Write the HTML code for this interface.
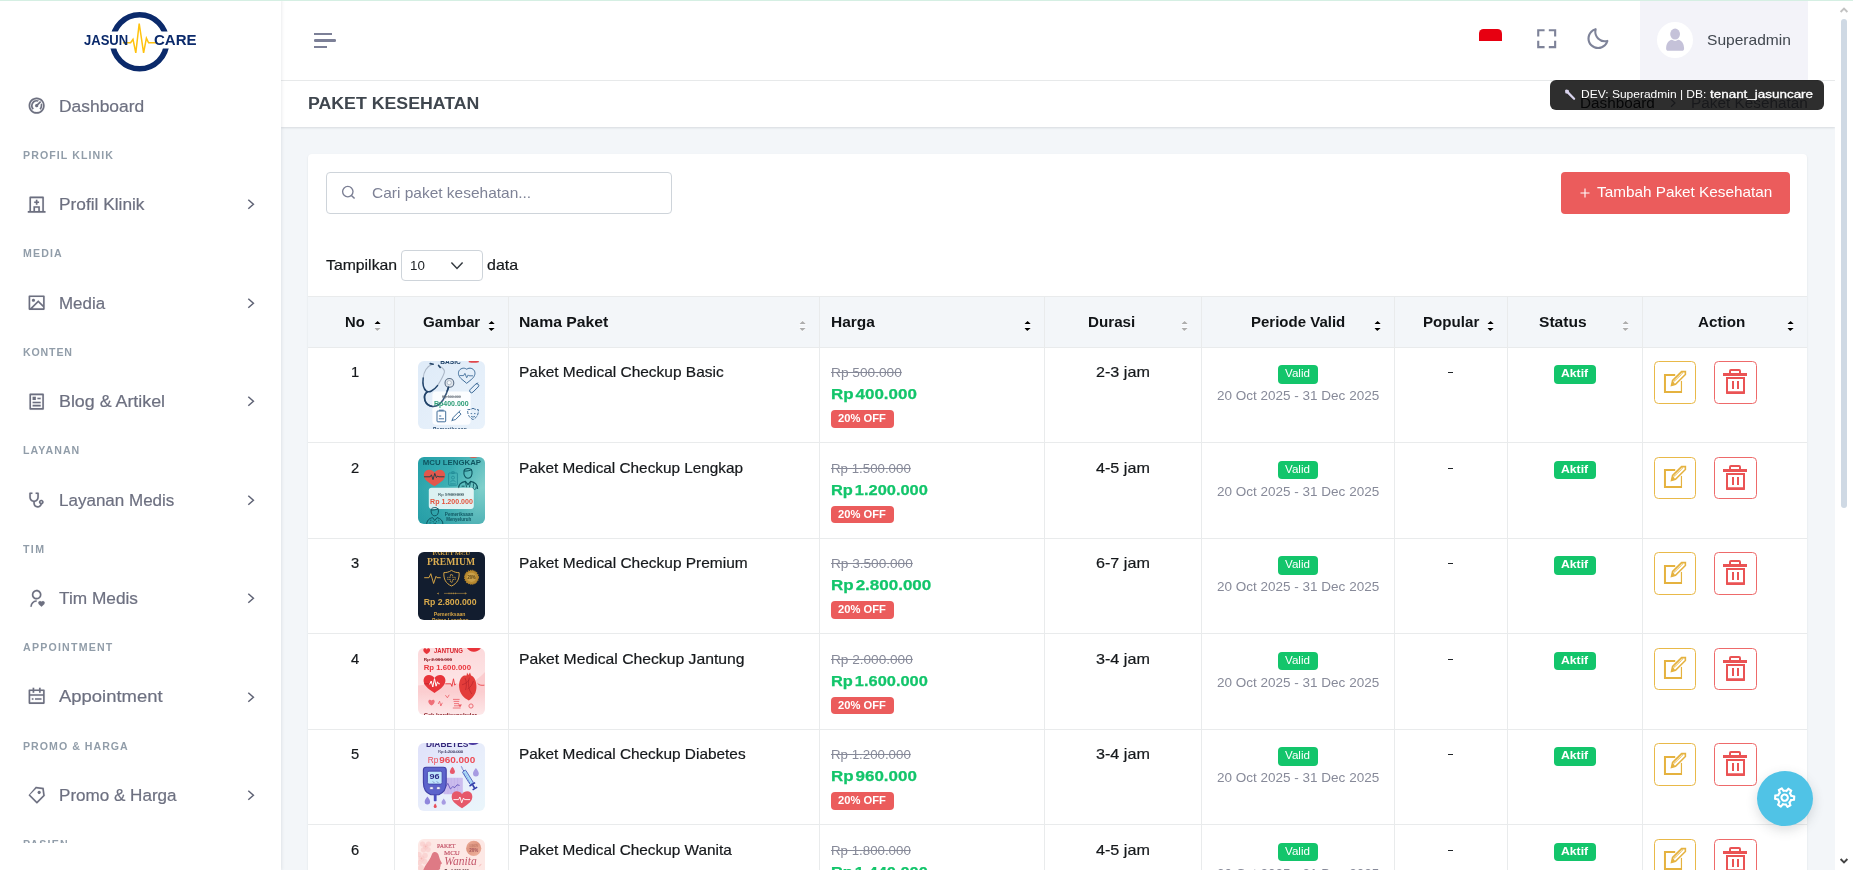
<!DOCTYPE html>
<html lang="en"><head><meta charset="utf-8"><title>Paket Kesehatan</title>
<style>
html,body{margin:0;padding:0;width:1853px;height:870px;overflow:hidden;background:#fff}
body{font-family:"Liberation Sans",sans-serif;}
#root{position:relative;width:1853px;height:870px;overflow:hidden;background:#fff}
.a{position:absolute;display:block}
.t{position:absolute;white-space:pre;line-height:1;display:block;transform-origin:0 50%}
</style></head><body><div id="root">

<div class="a" style="left:281px;top:0;width:1554px;height:870px;background:#f3f6f9"></div>
<div class="a" style="left:281px;top:0;width:1554px;height:80px;background:#fff;border-bottom:1px solid #e9ebec"></div>
<div class="a" style="left:281px;top:81px;width:1554px;height:46px;background:#fff;box-shadow:0 1px 2px rgba(56,65,74,.15)"></div>
<div class="a" style="left:0;top:0;width:1853px;height:1px;background:#d5efe3;z-index:50"></div>
<div class="a" style="left:0;top:0;width:281px;height:870px;background:#fff;box-shadow:1px 0 3px rgba(56,65,74,.10)"></div>
<svg class="a" style="left:70px;top:0" width="140" height="80" viewBox="0 0 140 80">
<defs><clipPath id="lc"><path d="M0 0H140V31.6H0zM0 48.4H140V80H0z"/></clipPath></defs>
<circle cx="69.6" cy="41.8" r="27" fill="none" stroke="#0b2a6b" stroke-width="5.6" clip-path="url(#lc)"/>
<path d="M52.9 42.8H60.6L63 39.4L65.8 52.9L69.2 23.5L73.6 52.9L76.4 38.2L78.6 42.8H86.5" fill="none" stroke="#ffc20e" stroke-width="1.5" stroke-linejoin="miter" stroke-linecap="butt"/>
</svg>
<span class="t" style="left:83.96px;top:32.57px;font-size:14.8px;font-weight:700;color:#0b2a6b;transform:scaleX(0.8810);">JASUN</span>
<span class="t" style="left:154.36px;top:32.57px;font-size:14.8px;font-weight:700;color:#0b2a6b;transform:scaleX(1.0155);">CARE</span>
<div class="a" style="left:0;top:80px;width:281px;height:763px;overflow:hidden">
<svg class="a" style="left:26.95px;top:16.35px;" width="19.3" height="19.3" viewBox="0 0 24 24"><path fill="#6d7080" stroke="#6d7080" stroke-width="0.12" d="M12 2c5.523 0 10 4.477 10 10s-4.477 10-10 10S2 17.523 2 12 6.477 2 12 2zm0 2a8 8 0 1 0 0 16 8 8 0 0 0 0-16zm0 1c1.018 0 1.985.217 2.858.608L13.295 7.17A5.003 5.003 0 0 0 7 12a4.98 4.98 0 0 0 1.464 3.536L7.05 16.95l-.156-.161A7 7 0 0 1 12 5zm6.392 4.143c.39.872.608 1.84.608 2.857a6.978 6.978 0 0 1-2.05 4.95l-1.414-1.414A4.98 4.98 0 0 0 17 12c0-.44-.057-.866-.163-1.272l1.555-1.585zm-2.15-2.8l1.415 1.414-3.725 3.726a2 2 0 1 1-1.414-1.414l3.725-3.726z"/></svg>
<span class="t" style="left:58.59px;top:17.90px;font-size:16.3px;font-weight:400;color:#6d7080;transform:scaleX(1.0693);-webkit-text-stroke:.2px #6d7080;">Dashboard</span>
<svg class="a" style="left:26.95px;top:114.78px;" width="19.3" height="19.3" viewBox="0 0 24 24"><path fill="#6d7080" stroke="#6d7080" stroke-width="0.12" d="M8 20v-6h8v6h3V4H5v16h3zm2 0h4v-4h-4v4zm11 0h2v2H1v-2h2V3a1 1 0 0 1 1-1h16a1 1 0 0 1 1 1v17zM11 8V6h2v2h2v2h-2v2h-2v-2H9V8h2z"/></svg>
<span class="t" style="left:58.59px;top:116.33px;font-size:16.3px;font-weight:400;color:#6d7080;transform:scaleX(1.0614);-webkit-text-stroke:.2px #6d7080;">Profil Klinik</span>
<svg class="a" style="left:244px;top:116.43px" width="14" height="16" viewBox="0 0 14 16"><path d="M4.3 3.7L9.4 8.2L4.3 12.7" fill="none" stroke="#5f6375" stroke-width="1.5"/></svg>
<svg class="a" style="left:26.95px;top:213.21px;" width="19.3" height="19.3" viewBox="0 0 24 24"><path fill="#6d7080" stroke="#6d7080" stroke-width="0.12" d="M4.828 21l-.02.02-.021-.02H2.992A.993.993 0 0 1 2 20.007V3.993A1 1 0 0 1 2.992 3h18.016c.548 0 .992.445.992.993v16.014a1 1 0 0 1-.992.993H4.828zM20 15V5H4v14L14 9l6 6zm0 2.828l-6-6L6.828 19H20v-1.172zM8 11a2 2 0 1 1 0-4 2 2 0 0 1 0 4z"/></svg>
<span class="t" style="left:58.59px;top:214.76px;font-size:16.3px;font-weight:400;color:#6d7080;transform:scaleX(1.0387);-webkit-text-stroke:.2px #6d7080;">Media</span>
<svg class="a" style="left:244px;top:214.86px" width="14" height="16" viewBox="0 0 14 16"><path d="M4.3 3.7L9.4 8.2L4.3 12.7" fill="none" stroke="#5f6375" stroke-width="1.5"/></svg>
<svg class="a" style="left:26.95px;top:311.64px;" width="19.3" height="19.3" viewBox="0 0 24 24"><path fill="#6d7080" stroke="#6d7080" stroke-width="0.12" d="M20 22H4a1 1 0 0 1-1-1V3a1 1 0 0 1 1-1h16a1 1 0 0 1 1 1v18a1 1 0 0 1-1 1zm-1-2V4H5v16h14zM7 6h4v4H7V6zm0 6h10v2H7v-2zm0 4h10v2H7v-2zm6-9h4v2h-4V7z"/></svg>
<span class="t" style="left:58.59px;top:313.19px;font-size:16.3px;font-weight:400;color:#6d7080;transform:scaleX(1.0954);-webkit-text-stroke:.2px #6d7080;">Blog &amp; Artikel</span>
<svg class="a" style="left:244px;top:313.29px" width="14" height="16" viewBox="0 0 14 16"><path d="M4.3 3.7L9.4 8.2L4.3 12.7" fill="none" stroke="#5f6375" stroke-width="1.5"/></svg>
<svg class="a" style="left:26.05px;top:410.07px;" width="19.3" height="19.3" viewBox="0 0 24 24"><path fill="#6d7080" stroke="#6d7080" stroke-width="0.12" d="M8 3v2H6v4c0 2.21 1.79 4 4 4s4-1.79 4-4V5h-2V3h3a1 1 0 0 1 1 1v5c0 2.973-2.162 5.44-5 5.917V16.5c0 1.933 1.567 3.5 3.5 3.5 1.497 0 2.775-.94 3.275-2.263C16.728 17.27 16 16.22 16 15c0-1.657 1.343-3 3-3s3 1.343 3 3c0 1.371-.92 2.527-2.176 2.885C19.21 20.252 17.059 22 14.5 22 11.462 22 9 19.538 9 16.5v-1.583C6.162 14.441 4 11.973 4 9V4a1 1 0 0 1 1-1h3zm11 11c-.552 0-1 .448-1 1s.448 1 1 1 1-.448 1-1-.448-1-1-1z"/></svg>
<span class="t" style="left:58.59px;top:411.62px;font-size:16.3px;font-weight:400;color:#6d7080;transform:scaleX(1.0447);-webkit-text-stroke:.2px #6d7080;">Layanan Medis</span>
<svg class="a" style="left:244px;top:411.72px" width="14" height="16" viewBox="0 0 14 16"><path d="M4.3 3.7L9.4 8.2L4.3 12.7" fill="none" stroke="#5f6375" stroke-width="1.5"/></svg>
<svg class="a" style="left:26.95px;top:508.50px;" width="19.3" height="19.3" viewBox="0 0 24 24"><path fill="#6d7080" stroke="#6d7080" stroke-width="0.12" d="M17.841 15.659l.176.177.178-.177a2.25 2.25 0 0 1 3.182 3.182l-3.36 3.359-3.358-3.359a2.25 2.25 0 0 1 3.182-3.182zM12 14v2a6 6 0 0 0-6 6H4a8 8 0 0 1 7.75-7.996L12 14zm0-13c3.315 0 6 2.685 6 6a5.998 5.998 0 0 1-5.775 5.996L12 13c-3.315 0-6-2.685-6-6a5.998 5.998 0 0 1 5.775-5.996L12 1zm0 2C9.79 3 8 4.79 8 7s1.79 4 4 4 4-1.79 4-4-1.79-4-4-4z"/></svg>
<span class="t" style="left:58.59px;top:510.05px;font-size:16.3px;font-weight:400;color:#6d7080;transform:scaleX(1.0603);-webkit-text-stroke:.2px #6d7080;">Tim Medis</span>
<svg class="a" style="left:244px;top:510.15px" width="14" height="16" viewBox="0 0 14 16"><path d="M4.3 3.7L9.4 8.2L4.3 12.7" fill="none" stroke="#5f6375" stroke-width="1.5"/></svg>
<svg class="a" style="left:26.95px;top:606.93px;" width="19.3" height="19.3" viewBox="0 0 24 24"><path fill="#6d7080" stroke="#6d7080" stroke-width="0.12" d="M17 3h4a1 1 0 0 1 1 1v16a1 1 0 0 1-1 1H3a1 1 0 0 1-1-1V4a1 1 0 0 1 1-1h4V1h2v2h6V1h2v2zm-2 2H9v2H7V5H4v4h16V5h-3v2h-2V5zm5 6H4v8h16v-8zM6 14h2v2H6v-2zm4 0h8v2h-8v-2z"/></svg>
<span class="t" style="left:58.59px;top:608.48px;font-size:16.3px;font-weight:400;color:#6d7080;transform:scaleX(1.1330);-webkit-text-stroke:.2px #6d7080;">Appointment</span>
<svg class="a" style="left:244px;top:608.58px" width="14" height="16" viewBox="0 0 14 16"><path d="M4.3 3.7L9.4 8.2L4.3 12.7" fill="none" stroke="#5f6375" stroke-width="1.5"/></svg>
<svg class="a" style="left:26.95px;top:705.36px;" width="19.3" height="19.3" viewBox="0 0 24 24"><path fill="#6d7080" stroke="#6d7080" stroke-width="0.12" d="M10.9 2.1l9.899 1.415 1.414 9.9-9.192 9.192a1 1 0 0 1-1.414 0l-9.19-9.192a1 1 0 0 1 0-1.414L10.9 2.1zm.707 2.122L3.828 12l8.486 8.485 7.778-7.778-1.06-7.425-7.425-1.06zm2.12 6.364a2 2 0 1 1 2.83-2.829 2 2 0 0 1-2.83 2.829z"/></svg>
<span class="t" style="left:58.59px;top:706.91px;font-size:16.3px;font-weight:400;color:#6d7080;transform:scaleX(1.0478);-webkit-text-stroke:.2px #6d7080;">Promo &amp; Harga</span>
<svg class="a" style="left:244px;top:707.01px" width="14" height="16" viewBox="0 0 14 16"><path d="M4.3 3.7L9.4 8.2L4.3 12.7" fill="none" stroke="#5f6375" stroke-width="1.5"/></svg>
<span class="t" style="left:23.37px;top:70.03px;font-size:10.6px;font-weight:700;color:#919da9;letter-spacing:1.086px;transform:scaleX(1.0002);">PROFIL KLINIK</span>
<span class="t" style="left:23.37px;top:168.46px;font-size:10.6px;font-weight:700;color:#919da9;letter-spacing:1.149px;transform:scaleX(1.0002);">MEDIA</span>
<span class="t" style="left:23.37px;top:266.89px;font-size:10.6px;font-weight:700;color:#919da9;letter-spacing:0.840px;transform:scaleX(1.0002);">KONTEN</span>
<span class="t" style="left:23.37px;top:365.32px;font-size:10.6px;font-weight:700;color:#919da9;letter-spacing:1.065px;transform:scaleX(1.0002);">LAYANAN</span>
<span class="t" style="left:23.37px;top:463.75px;font-size:10.6px;font-weight:700;color:#919da9;letter-spacing:1.393px;transform:scaleX(1.0002);">TIM</span>
<span class="t" style="left:23.37px;top:562.18px;font-size:10.6px;font-weight:700;color:#919da9;letter-spacing:1.223px;transform:scaleX(1.0002);">APPOINTMENT</span>
<span class="t" style="left:23.37px;top:660.61px;font-size:10.6px;font-weight:700;color:#919da9;letter-spacing:1.027px;transform:scaleX(1.0002);">PROMO &amp; HARGA</span>
<span class="t" style="left:23.37px;top:759.04px;font-size:10.6px;font-weight:700;color:#919da9;letter-spacing:1.196px;transform:scaleX(1.0002);">PASIEN</span>
</div>
<div class="a" style="left:314px;top:33px;width:18px;height:2px;background:#7c8097"></div><div class="a" style="left:314px;top:39.2px;width:21.8px;height:2.6px;border-radius:1.3px;background:#7c8097"></div><div class="a" style="left:314px;top:46px;width:13px;height:2px;background:#7c8097"></div>
<div class="a" style="left:1479px;top:28.8px;width:23px;height:11.8px;background:#e70011;border-radius:4.5px 4.5px 0 0"></div>
<svg class="a" style="left:1533.80px;top:26.30px;" width="25.4" height="25.4" viewBox="0 0 24 24"><path fill="#7e8399" stroke="#7e8399" stroke-width="0" d="M5 5h5V3H3v7h2zm5 14H5v-5H3v7h7zm11-5h-2v5h-5v2h7zm-2-4h2V3h-7v2h5z"/></svg>
<svg class="a" style="left:1585.32px;top:26.32px;" width="25.56" height="25.56" viewBox="0 0 24 24"><path fill="#7e8399" stroke="#7e8399" stroke-width="0" d="M20.742 13.045a8.088 8.088 0 0 1-2.077.271c-2.135 0-4.14-.83-5.646-2.336a8.025 8.025 0 0 1-2.064-7.723A1 1 0 0 0 9.73 2.034a10.014 10.014 0 0 0-4.489 2.582c-3.898 3.898-3.898 10.243 0 14.143a9.937 9.937 0 0 0 7.072 2.930 9.930 9.930 0 0 0 7.070-2.929 10.007 10.007 0 0 0 2.583-4.491 1.001 1.001 0 0 0-1.224-1.224zm-2.772 4.301a7.947 7.947 0 0 1-5.656 2.343 7.953 7.953 0 0 1-5.658-2.344c-3.118-3.119-3.118-8.195 0-11.314a7.923 7.923 0 0 1 2.060-1.483 10.027 10.027 0 0 0 2.890 7.848 9.972 9.972 0 0 0 7.848 2.891 8.036 8.036 0 0 1-1.484 2.059z"/></svg>
<div class="a" style="left:1640px;top:1px;width:168px;height:79px;background:#f3f3f9"></div>
<svg class="a" style="left:1657px;top:22px" width="36" height="36" viewBox="0 0 36 36"><circle cx="18" cy="18" r="18" fill="#fff"/>
<ellipse cx="18.1" cy="12.1" rx="4.9" ry="5.5" fill="#c5c2d9"/><path d="M9.100 26.400c.2-4.800 2.200-7.900 5.900-8.600c1.900 1.500 4.300 1.500 6.200 0c3.700.700 5.700 3.800 5.900 8.600c0 1.500-.800 2.400-2.200 2.400H11.300c-1.400 0-2.200-.900-2.200-2.400z" fill="#c5c2d9"/></svg>
<span class="t" style="left:1706.65px;top:32.20px;font-size:15px;font-weight:400;color:#41474f;transform:scaleX(1.0372);">Superadmin</span>
<span class="t" style="left:308.11px;top:95.53px;font-size:15.8px;font-weight:700;color:#3f464e;transform:scaleX(1.1226);">PAKET KESEHATAN</span>
<span class="t" style="left:1580.30px;top:96.15px;font-size:14px;font-weight:400;color:#212529;transform:scaleX(1.0926);">Dashboard</span>
<svg class="a" style="left:1667px;top:97px" width="12" height="12" viewBox="0 0 12 12"><path d="M4 2.2L8 6L4 9.8" fill="none" stroke="#878a99" stroke-width="1.2"/></svg>
<span class="t" style="left:1691.30px;top:96.15px;font-size:14px;font-weight:400;color:#878a99;transform:scaleX(1.0956);">Paket Kesehatan</span>
<div class="a" style="left:1550px;top:80px;width:274px;height:29.5px;background:rgba(0,0,0,.82);border-radius:6px;z-index:20"></div>
<svg class="a" style="left:1564px;top:88px;z-index:21" width="13" height="13" viewBox="0 0 13 13"><path d="M2 1.4l2.6.5.5 2.2 5.8 5.8a1 1 0 0 1-1.6 1.6L3.5 5.7 1.4 5.2 1 2.6z" fill="#d9d4ee"/></svg>
<span class="t" style="left:1581.45px;top:88.89px;font-size:11px;font-weight:400;color:#fff;transform:scaleX(1.0903);z-index:21;">DEV: Superadmin | DB: </span>
<span class="t" style="left:1710.05px;top:88.89px;font-size:11px;font-weight:400;color:#fff;transform:scaleX(1.2210);z-index:21;-webkit-text-stroke:.3px #fff;">tenant_jasuncare</span>
<div class="a" style="left:308px;top:154px;width:1499.3px;height:740px;background:#fff;border-radius:4px;box-shadow:0 1px 2px rgba(56,65,74,.12)"></div>
<div class="a" style="left:326px;top:172px;width:344px;height:40px;border:1px solid #ced4da;border-radius:4px;background:#fff"></div>
<svg class="a" style="left:341px;top:184.7px" width="15" height="15" viewBox="0 0 15 15"><circle cx="6.8" cy="6.6" r="5.2" fill="none" stroke="#7a7e93" stroke-width="1.35"/><path d="M10.4 10.4L13.6 13.6" stroke="#7a7e93" stroke-width="1.45"/></svg>
<span class="t" style="left:371.57px;top:186.03px;font-size:14.5px;font-weight:400;color:#7e8296;transform:scaleX(1.0674);">Cari paket kesehatan...</span>
<div class="a" style="left:1561px;top:172px;width:229px;height:41.5px;background:#eb5c5c;border-radius:4px"></div>
<svg class="a" style="left:1579px;top:187px" width="12" height="12" viewBox="0 0 12 12"><path d="M6 1.5V10.5M1.5 6H10.5" stroke="#fff" stroke-width="1.1"/></svg>
<span class="t" style="left:1597.16px;top:185.27px;font-size:14.8px;font-weight:400;color:#fff;transform:scaleX(1.0343);">Tambah Paket Kesehatan</span>
<span class="t" style="left:325.55px;top:257.30px;font-size:15px;font-weight:400;color:#15181b;transform:scaleX(1.0528);-webkit-text-stroke:.2px #15181b;">Tampilkan</span>
<div class="a" style="left:401.4px;top:250.3px;width:79.4px;height:28.4px;border:1px solid #ced4da;border-radius:4px;background:#fff"></div>
<span class="t" style="left:409.85px;top:259.00px;font-size:13px;font-weight:400;color:#212529;transform:scaleX(1.0284);">10</span>
<svg class="a" style="left:449px;top:259px" width="16" height="14" viewBox="0 0 16 14"><path d="M2.4 3.6L8 9.4L13.6 3.6" fill="none" stroke="#343a40" stroke-width="1.5"/></svg>
<span class="t" style="left:486.65px;top:257.30px;font-size:15px;font-weight:400;color:#15181b;transform:scaleX(1.0650);-webkit-text-stroke:.2px #15181b;">data</span>
<div class="a" style="left:308px;top:296px;width:1499.3px;height:50px;background:#f3f6f9;border-top:1px solid #e9ebec;border-bottom:1px solid #e9ebec;box-sizing:content-box"></div>
<div class="a" style="left:308px;top:442px;width:1499.3px;height:1px;background:#e9ebec"></div>
<div class="a" style="left:308px;top:538px;width:1499.3px;height:1px;background:#e9ebec"></div>
<div class="a" style="left:308px;top:633px;width:1499.3px;height:1px;background:#e9ebec"></div>
<div class="a" style="left:308px;top:729px;width:1499.3px;height:1px;background:#e9ebec"></div>
<div class="a" style="left:308px;top:824px;width:1499.3px;height:1px;background:#e9ebec"></div>
<div class="a" style="left:394px;top:296px;width:1px;height:574px;background:#e9ebec"></div>
<div class="a" style="left:508px;top:296px;width:1px;height:574px;background:#e9ebec"></div>
<div class="a" style="left:819px;top:296px;width:1px;height:574px;background:#e9ebec"></div>
<div class="a" style="left:1044px;top:296px;width:1px;height:574px;background:#e9ebec"></div>
<div class="a" style="left:1201px;top:296px;width:1px;height:574px;background:#e9ebec"></div>
<div class="a" style="left:1394px;top:296px;width:1px;height:574px;background:#e9ebec"></div>
<div class="a" style="left:1507px;top:296px;width:1px;height:574px;background:#e9ebec"></div>
<div class="a" style="left:1642px;top:296px;width:1px;height:574px;background:#e9ebec"></div>
<span class="t" style="left:344.87px;top:314.64px;font-size:14.6px;font-weight:700;color:#111417;transform:scaleX(1.0106);">No</span>
<svg class="a" style="left:373.59999999999997px;top:320px" width="8" height="12" viewBox="0 0 8 12"><g stroke="#fff" stroke-width="1.1" stroke-opacity=".8" paint-order="stroke"><path d="M0.5 4.1L3.6 0.9L6.7 4.1z" fill="#000"/><path d="M0.5 7.9H6.7L3.2 11.1z" fill="#adadad"/></g></svg>
<span class="t" style="left:422.87px;top:314.64px;font-size:14.6px;font-weight:700;color:#111417;transform:scaleX(1.0384);">Gambar</span>
<svg class="a" style="left:487.9px;top:320px" width="8" height="12" viewBox="0 0 8 12"><g stroke="#fff" stroke-width="1.1" stroke-opacity=".8" paint-order="stroke"><path d="M0.5 4.1L3.6 0.9L6.7 4.1z" fill="#000"/><path d="M0.5 7.9H6.7L3.2 11.1z" fill="#000"/></g></svg>
<span class="t" style="left:518.87px;top:314.64px;font-size:14.6px;font-weight:700;color:#111417;transform:scaleX(1.0789);">Nama Paket</span>
<svg class="a" style="left:798.8px;top:320px" width="8" height="12" viewBox="0 0 8 12"><g stroke="#fff" stroke-width="1.1" stroke-opacity=".8" paint-order="stroke"><path d="M0.5 4.1L3.6 0.9L6.7 4.1z" fill="#adadad"/><path d="M0.5 7.9H6.7L3.2 11.1z" fill="#adadad"/></g></svg>
<span class="t" style="left:830.67px;top:314.64px;font-size:14.6px;font-weight:700;color:#111417;transform:scaleX(1.0604);">Harga</span>
<svg class="a" style="left:1023.9999999999999px;top:320px" width="8" height="12" viewBox="0 0 8 12"><g stroke="#fff" stroke-width="1.1" stroke-opacity=".8" paint-order="stroke"><path d="M0.5 4.1L3.6 0.9L6.7 4.1z" fill="#000"/><path d="M0.5 7.9H6.7L3.2 11.1z" fill="#000"/></g></svg>
<span class="t" style="left:1087.87px;top:314.64px;font-size:14.6px;font-weight:700;color:#111417;transform:scaleX(1.0408);">Durasi</span>
<svg class="a" style="left:1180.6000000000001px;top:320px" width="8" height="12" viewBox="0 0 8 12"><g stroke="#fff" stroke-width="1.1" stroke-opacity=".8" paint-order="stroke"><path d="M0.5 4.1L3.6 0.9L6.7 4.1z" fill="#adadad"/><path d="M0.5 7.9H6.7L3.2 11.1z" fill="#adadad"/></g></svg>
<span class="t" style="left:1250.87px;top:314.64px;font-size:14.6px;font-weight:700;color:#111417;transform:scaleX(1.0286);">Periode Valid</span>
<svg class="a" style="left:1374.0px;top:320px" width="8" height="12" viewBox="0 0 8 12"><g stroke="#fff" stroke-width="1.1" stroke-opacity=".8" paint-order="stroke"><path d="M0.5 4.1L3.6 0.9L6.7 4.1z" fill="#000"/><path d="M0.5 7.9H6.7L3.2 11.1z" fill="#000"/></g></svg>
<span class="t" style="left:1423.27px;top:314.64px;font-size:14.6px;font-weight:700;color:#111417;transform:scaleX(1.0359);">Popular</span>
<svg class="a" style="left:1487.2px;top:320px" width="8" height="12" viewBox="0 0 8 12"><g stroke="#fff" stroke-width="1.1" stroke-opacity=".8" paint-order="stroke"><path d="M0.5 4.1L3.6 0.9L6.7 4.1z" fill="#000"/><path d="M0.5 7.9H6.7L3.2 11.1z" fill="#000"/></g></svg>
<span class="t" style="left:1538.87px;top:314.64px;font-size:14.6px;font-weight:700;color:#111417;transform:scaleX(1.0687);">Status</span>
<svg class="a" style="left:1622.0px;top:320px" width="8" height="12" viewBox="0 0 8 12"><g stroke="#fff" stroke-width="1.1" stroke-opacity=".8" paint-order="stroke"><path d="M0.5 4.1L3.6 0.9L6.7 4.1z" fill="#adadad"/><path d="M0.5 7.9H6.7L3.2 11.1z" fill="#adadad"/></g></svg>
<span class="t" style="left:1697.87px;top:314.64px;font-size:14.6px;font-weight:700;color:#111417;transform:scaleX(1.0412);">Action</span>
<svg class="a" style="left:1787.2px;top:320px" width="8" height="12" viewBox="0 0 8 12"><g stroke="#fff" stroke-width="1.1" stroke-opacity=".8" paint-order="stroke"><path d="M0.5 4.1L3.6 0.9L6.7 4.1z" fill="#000"/><path d="M0.5 7.9H6.7L3.2 11.1z" fill="#000"/></g></svg>
<span class="t" style="left:350.87px;top:364.84px;font-size:14.6px;font-weight:400;color:#15181b;transform:scaleX(1.0063);-webkit-text-stroke:.2px #15181b;">1</span>
<div class="a" style="left:418px;top:361.4px;width:67px;height:67.2px;border-radius:6px;overflow:hidden"><svg width="67" height="68" viewBox="0 0 67 68" style="display:block;filter:blur(.35px)"><defs><linearGradient id="g1" x1="0" y1="0" x2="1" y2="1"><stop offset="0" stop-color="#dfebf8"/><stop offset="1" stop-color="#e9f2fb"/></linearGradient></defs>
<rect width="67" height="68" fill="url(#g1)"/>
<text x="22.2" y="2.6" font-size="6.6" font-weight="700" fill="#24466b" font-family="Liberation Sans, sans-serif" textLength="20.6">BASIC</text>
<path d="M50.7 0H60.8V1.2Q55.7 2.4 50.7 1.2z" fill="#e0464b"/>
<path d="M14.3 3.2C9 5 5.6 11 5.2 17" fill="none" stroke="#aab6c6" stroke-width="1.1"/>
<path d="M21.3 5.3C25 7 27 9.4 26.3 11.6C25 16 22.5 20 19.5 24.6" fill="none" stroke="#aab6c6" stroke-width="1.1"/>
<path d="M12.2 2.6l3 .6" stroke="#27476a" stroke-width="1.6" stroke-linecap="round"/>
<path d="M20.6 4.4l1.6 2" stroke="#27476a" stroke-width="1.6" stroke-linecap="round"/>
<path d="M5.2 17C4.4 23 5.2 27.6 8.4 30.1C10.2 31.2 12 30.8 13.4 30C16 28.6 18 26.6 19.5 24.6" fill="none" stroke="#21436a" stroke-width="1.5" stroke-linecap="round"/>
<path d="M9.6 30.6C6.8 32.4 6 36 6.8 39C7.8 42.6 10.8 45 14.6 45.4C19 45.8 22.6 42.6 25 39C27.4 35.2 29.4 30.6 30.6 26" fill="none" stroke="#21436a" stroke-width="1.5" stroke-linecap="round"/>
<circle cx="31.4" cy="21.9" r="4.4" fill="#dfe5ec" stroke="#5b6e86" stroke-width="1.1"/>
<circle cx="31.2" cy="21.7" r="2.1" fill="#f7f9fb" stroke="#9aa8b8" stroke-width=".7"/>
<rect x="14.4" y="30.6" width="38.2" height="33.1" rx="3.4" fill="#fff" fill-opacity=".86"/>
<path d="M9.6 30.6C6.8 32.4 6 36 6.8 39C7.8 42.6 10.8 45 14.6 45.4C19 45.8 22.6 42.6 25 39C27.4 35.2 29.4 30.6 30.6 26" fill="none" stroke="#21436a" stroke-width="1.5" stroke-linecap="round" stroke-opacity=".85"/>
<text x="24.2" y="37" font-size="3.4" fill="#5a6470" font-family="Liberation Sans, sans-serif" textLength="18.5" text-decoration="line-through">Rp 500.000</text>
<path d="M24 35.6H43" stroke="#5a6470" stroke-width=".4"/>
<text x="16" y="45.3" font-size="7.3" font-weight="700" fill="#2f9e78" font-family="Liberation Sans, sans-serif" textLength="34.6" lengthAdjust="spacingAndGlyphs">Rp400.000</text>
<path d="M48.6 8.2c-2.6-2-6.6-.9-7.8 2.1c-1.1 2.9.5 5.8 2.9 7.9l5 4.1l5-4.1c2.4-2.100 4-5 2.900-7.900c-1.200-3-5.200-4.100-7.800-2.100z" fill="none" stroke="#2e5f8f" stroke-width=".9"/>
<path d="M41.6 14.600h4l1.300-2.200l1.800 4.300l1.500-2.800l.9.900h4" fill="none" stroke="#2e5f8f" stroke-width=".8"/>
<rect x="-1.900" y="-5.600" width="3.800" height="11.200" rx="1.900" transform="translate(56.200 27.200) rotate(45)" fill="none" stroke="#2e5f8f" stroke-width=".9"/>
<path d="M58 23.400l1.800-1.800" stroke="#2e5f8f" stroke-width=".9"/>
<rect x="19" y="50" width="8.700" height="10.800" rx=".8" fill="none" stroke="#2e5f8f" stroke-width=".9"/>
<path d="M21 49.200h4.700M20.800 57.800h5.200M21.200 55h2" stroke="#2e5f8f" stroke-width=".9"/>
<path d="M34 59.400l1.300-3l5.500-5.500l2.200 2.200l-5.500 5.500z" fill="none" stroke="#2e5f8f" stroke-width=".9"/>
<path d="M40.800 50.900l1.500-1.300M33.600 59.800l.9-.8" stroke="#2e5f8f" stroke-width=".9"/>
<path d="M55 47.300c2.300 1.300 3.900 1.400 5.300 1.300c.4 4.400-1.300 8-5.300 10c-4-2-5.700-5.600-5.300-10c1.400.1 3-0 5.300-1.300z" fill="none" stroke="#2e5f8f" stroke-width=".9" stroke-dasharray="3 1.200"/>
<path d="M52.600 52.600h1.500M56 52.600h1.500M53 55.400q2 1.400 4 0" stroke="#2e5f8f" stroke-width=".8" fill="none"/>
<text x="14.900" y="70" font-size="5" font-weight="700" fill="#24466b" font-family="Liberation Sans, sans-serif" textLength="34">Pemeriksaan</text>
</svg></div>
<span class="t" style="left:518.67px;top:364.84px;font-size:14.6px;font-weight:400;color:#15181b;transform:scaleX(1.0602);-webkit-text-stroke:.2px #15181b;">Paket Medical Checkup Basic</span>
<span class="t" style="left:830.75px;top:366.40px;font-size:13px;font-weight:400;color:#878a99;transform:scaleX(1.0527);text-decoration:line-through;">Rp 500.000</span>
<span class="t" style="left:830.66px;top:386.77px;font-size:14.8px;font-weight:700;color:#13c56b;transform:scaleX(1.1461);word-spacing:-2.4px;-webkit-text-stroke:.25px #13c56b;">Rp 400.000</span>
<div class="a" style="left:831px;top:410.4px;width:63px;height:17.6px;background:#eb5c5c;border-radius:4px"></div>
<span class="t" style="left:838.09px;top:414.18px;font-size:10.3px;font-weight:700;color:#fff;transform:scaleX(1.0852);">20% OFF</span>
<span class="t" style="left:1096.27px;top:364.84px;font-size:14.6px;font-weight:400;color:#15181b;transform:scaleX(1.1069);-webkit-text-stroke:.2px #15181b;">2-3 jam</span>
<div class="a" style="left:1278px;top:365.4px;width:40px;height:18.3px;background:#13c56b;border-radius:4px"></div>
<span class="t" style="left:1285.35px;top:367.69px;font-size:11px;font-weight:400;color:#fff;transform:scaleX(1.0551);">Valid</span>
<span class="t" style="left:1216.95px;top:388.90px;font-size:13px;font-weight:400;color:#878a99;transform:scaleX(1.0389);">20 Oct 2025 - 31 Dec 2025</span>
<div class="a" style="left:1448.4px;top:371.6px;width:5px;height:1.3px;background:#212529"></div>
<div class="a" style="left:1554px;top:365.4px;width:42.4px;height:18.3px;background:#13c56b;border-radius:4px"></div>
<span class="t" style="left:1561.45px;top:367.69px;font-size:11px;font-weight:700;color:#fff;transform:scaleX(1.1107);">Aktif</span>
<div class="a" style="left:1654px;top:361.4px;width:40px;height:40.2px;border:1px solid #e9b949;border-radius:4.5px;background:#fff"></div>
<svg class="a" style="left:1659px;top:366px" width="32" height="32" viewBox="0 0 32 32"><path d="M5.96 8.9H16.2M5.96 7.9V27M4.96 26H23" fill="none" stroke="#e5b23f" stroke-width="2"/><path d="M22.45 14.9V27" fill="none" stroke="#e5b23f" stroke-width="1.2"/><path d="M22.6 5.6H26.4V8.5L16.5 18.4L12.5 19.5L13.6 14.5Z" fill="#fff" stroke="#e5b23f" stroke-width="1.55" stroke-linejoin="miter"/><path d="M13.6 14.5L16.5 18.4L12.3 19.7Z" fill="#e5b23f"/><path d="M23.6 6.6L14.8 15.4" stroke="#e5b23f" stroke-width="1.5" stroke-dasharray="0.9 0.6"/></svg>
<div class="a" style="left:1714.4px;top:361.4px;width:41px;height:40.2px;border:1px solid #ee6a6a;border-radius:4.5px;background:#fff"></div>
<svg class="a" style="left:1719px;top:366px" width="32" height="32" viewBox="0 0 32 32"><g fill="#ea5354"><rect x="4" y="7" width="24" height="3"/><rect x="7" y="11" width="19" height="2"/><rect x="7" y="11" width="2" height="16.6"/><rect x="24" y="11" width="2" height="16.6"/><path d="M7 25.2H26V27a1 1 0 0 1-1 1H8a1 1 0 0 1-1-1z"/><rect x="13" y="15" width="2" height="8"/><rect x="18" y="15" width="2" height="8"/></g><path d="M11 7.5V5a1 1 0 0 1 1-1H20a1 1 0 0 1 1 1V7.500" fill="none" stroke="#ea5354" stroke-width="2"/></svg>
<span class="t" style="left:350.87px;top:460.84px;font-size:14.6px;font-weight:400;color:#15181b;transform:scaleX(1.0063);-webkit-text-stroke:.2px #15181b;">2</span>
<div class="a" style="left:418px;top:456.9px;width:67px;height:67.2px;border-radius:6px;overflow:hidden"><svg width="67" height="68" viewBox="0 0 67 68" style="display:block;filter:blur(.35px)"><defs><linearGradient id="g2" x1="0" y1="0" x2="1" y2=".25"><stop offset="0" stop-color="#27a2aa"/><stop offset=".5" stop-color="#3eb0b4"/><stop offset="1" stop-color="#7fcfcb"/></linearGradient>
<linearGradient id="g2b" x1="0" y1="0" x2="0" y2="1"><stop offset="0" stop-color="#1b98a2" stop-opacity=".25"/><stop offset=".45" stop-color="#1b98a2" stop-opacity="0"/><stop offset="1" stop-color="#168e9a" stop-opacity=".45"/></linearGradient></defs>
<rect width="67" height="68" fill="url(#g2)"/>
<rect width="67" height="68" fill="url(#g2b)"/>
<text x="4.800" y="7.800" font-size="7.700" font-weight="700" fill="#0f5560" font-family="Liberation Sans, sans-serif" textLength="58.300" lengthAdjust="spacingAndGlyphs">MCU LENGKAP</text>
<path d="M51.200 0H59.900Q55.500 1.800 51.200 0z" fill="#e2574c"/>
<path d="M16.500 15.400c-2.800-4.200-9.600-3.600-10.600 1.600c-.9 4.800 3.600 8.200 10.600 12.200c7-4 11.500-7.400 10.600-12.200c-1-5.200-7.800-5.800-10.600-1.600z" fill="#e2574c"/>
<path d="M6 19.800h6.200l1.200-2l1.600 4.800l1.800-6.200l1.600 4.200l1.300-1.500l1.200.7h5.500" fill="none" stroke="#173f4a" stroke-width=".9"/>
<rect x="30.600" y="16" width="8.800" height="12.200" rx=".7" fill="none" stroke="#1e8794" stroke-width=".8"/>
<path d="M33.800 14.700h2.400v1.800h-2.400z" fill="none" stroke="#1e8794" stroke-width=".7"/>
<circle cx="35" cy="20.600" r="1.500" fill="none" stroke="#1e8794" stroke-width=".7"/><path d="M32.400 25.200c.4-2 4.800-2 5.200 0M32.200 26.800h5.600" fill="none" stroke="#1e8794" stroke-width=".7"/>
<path d="M46 13.800c.5-2.600 7-3.600 8 .6c.4 3.600-1 6.800-4 6.800s-4.600-3.400-4-7.400z" fill="none" stroke="#0f5560" stroke-width="1.100"/>
<path d="M46 14c2.500.3 5.800-.2 8-1.600" fill="none" stroke="#0f5560" stroke-width="1"/>
<path d="M40.400 32c0-4.600 2.600-6.800 7-7.600l2.600 3.200l2.600-3.200c4.400.8 7 3 7 7.600" fill="none" stroke="#0f5560" stroke-width="1.100"/>
<path d="M47.400 24.400l1.200 6M52.600 24.400l-1.200 6M55.400 26.400v3.400a1.600 1.600 0 1 0 2.400 0" fill="none" stroke="#0f5560" stroke-width=".9"/>
<path d="M43.600 29.200h3" stroke="#0f5560" stroke-width=".9"/>
<rect x="10.800" y="30.800" width="45" height="21.100" rx="2.800" fill="#f3fbfb" fill-opacity=".88"/>
<text x="20" y="38.600" font-size="4.200" fill="#1d3a40" font-family="Liberation Sans, sans-serif" textLength="26" lengthAdjust="spacingAndGlyphs">Rp 1.500.000</text>
<path d="M27.400 37.200H46" stroke="#1d3a40" stroke-width=".45"/>
<text x="12.100" y="47.300" font-size="7.700" font-weight="700" fill="#e5533d" font-family="Liberation Sans, sans-serif" textLength="42.800" lengthAdjust="spacingAndGlyphs">Rp 1.200.000</text>
<path d="M13.200 52.600c.4-2.400 6.400-3.200 7.200.4c.4 3.200-.9 5.800-3.600 5.800s-4.100-2.800-3.600-6.200z" fill="none" stroke="#0f5560" stroke-width="1"/>
<path d="M13.200 53c2.200.2 5.200-.2 7.200-1.400" fill="none" stroke="#0f5560" stroke-width=".9"/>
<path d="M8.600 68c0-4.400 2.400-6.600 6-7.400l2.200 3l2.200-3c3.600.8 6 3 6 7.400" fill="none" stroke="#0f5560" stroke-width="1"/>
<path d="M12.800 62.600v3M20.800 62.600v2.600M11.400 65.800l1.400 1.400M14.800 64l2 3.600 2-3.600" fill="none" stroke="#0f5560" stroke-width=".8" stroke-dasharray="1.600 .8"/>
<text x="26.800" y="58.800" font-size="4.500" font-weight="700" fill="#105863" font-family="Liberation Sans, sans-serif" textLength="28.500" lengthAdjust="spacingAndGlyphs">Pemeriksaan</text>
<text x="28.200" y="64.300" font-size="4.500" font-weight="700" fill="#105863" font-family="Liberation Sans, sans-serif" textLength="25" lengthAdjust="spacingAndGlyphs">Menyeluruh</text>
</svg></div>
<span class="t" style="left:518.67px;top:460.84px;font-size:14.6px;font-weight:400;color:#15181b;transform:scaleX(1.0502);-webkit-text-stroke:.2px #15181b;">Paket Medical Checkup Lengkap</span>
<span class="t" style="left:830.75px;top:462.40px;font-size:13px;font-weight:400;color:#878a99;transform:scaleX(1.0218);text-decoration:line-through;">Rp 1.500.000</span>
<span class="t" style="left:830.66px;top:482.77px;font-size:14.8px;font-weight:700;color:#13c56b;transform:scaleX(1.1103);word-spacing:-2.4px;-webkit-text-stroke:.25px #13c56b;">Rp 1.200.000</span>
<div class="a" style="left:831px;top:505.9px;width:63px;height:17.6px;background:#eb5c5c;border-radius:4px"></div>
<span class="t" style="left:838.09px;top:510.18px;font-size:10.3px;font-weight:700;color:#fff;transform:scaleX(1.0852);">20% OFF</span>
<span class="t" style="left:1096.27px;top:460.84px;font-size:14.6px;font-weight:400;color:#15181b;transform:scaleX(1.1069);-webkit-text-stroke:.2px #15181b;">4-5 jam</span>
<div class="a" style="left:1278px;top:460.9px;width:40px;height:18.3px;background:#13c56b;border-radius:4px"></div>
<span class="t" style="left:1285.35px;top:463.69px;font-size:11px;font-weight:400;color:#fff;transform:scaleX(1.0551);">Valid</span>
<span class="t" style="left:1216.95px;top:484.90px;font-size:13px;font-weight:400;color:#878a99;transform:scaleX(1.0389);">20 Oct 2025 - 31 Dec 2025</span>
<div class="a" style="left:1448.4px;top:467.6px;width:5px;height:1.3px;background:#212529"></div>
<div class="a" style="left:1554px;top:460.9px;width:42.4px;height:18.3px;background:#13c56b;border-radius:4px"></div>
<span class="t" style="left:1561.45px;top:463.69px;font-size:11px;font-weight:700;color:#fff;transform:scaleX(1.1107);">Aktif</span>
<div class="a" style="left:1654px;top:456.9px;width:40px;height:40.2px;border:1px solid #e9b949;border-radius:4.5px;background:#fff"></div>
<svg class="a" style="left:1659px;top:461px" width="32" height="32" viewBox="0 0 32 32"><path d="M5.96 8.9H16.2M5.96 7.9V27M4.96 26H23" fill="none" stroke="#e5b23f" stroke-width="2"/><path d="M22.45 14.9V27" fill="none" stroke="#e5b23f" stroke-width="1.2"/><path d="M22.6 5.6H26.4V8.5L16.5 18.4L12.5 19.5L13.6 14.5Z" fill="#fff" stroke="#e5b23f" stroke-width="1.55" stroke-linejoin="miter"/><path d="M13.6 14.5L16.5 18.4L12.3 19.7Z" fill="#e5b23f"/><path d="M23.6 6.6L14.8 15.4" stroke="#e5b23f" stroke-width="1.5" stroke-dasharray="0.9 0.6"/></svg>
<div class="a" style="left:1714.4px;top:456.9px;width:41px;height:40.2px;border:1px solid #ee6a6a;border-radius:4.5px;background:#fff"></div>
<svg class="a" style="left:1719px;top:462px" width="32" height="32" viewBox="0 0 32 32"><g fill="#ea5354"><rect x="4" y="7" width="24" height="3"/><rect x="7" y="11" width="19" height="2"/><rect x="7" y="11" width="2" height="16.6"/><rect x="24" y="11" width="2" height="16.6"/><path d="M7 25.2H26V27a1 1 0 0 1-1 1H8a1 1 0 0 1-1-1z"/><rect x="13" y="15" width="2" height="8"/><rect x="18" y="15" width="2" height="8"/></g><path d="M11 7.5V5a1 1 0 0 1 1-1H20a1 1 0 0 1 1 1V7.500" fill="none" stroke="#ea5354" stroke-width="2"/></svg>
<span class="t" style="left:350.87px;top:555.84px;font-size:14.6px;font-weight:400;color:#15181b;transform:scaleX(1.0063);-webkit-text-stroke:.2px #15181b;">3</span>
<div class="a" style="left:418px;top:552.4px;width:67px;height:67.2px;border-radius:6px;overflow:hidden"><svg width="67" height="68" viewBox="0 0 67 68" style="display:block;filter:blur(.35px)"><defs></defs>
<rect width="67" height="68" fill="#121d2f"/>
<text x="14.400" y="2.600" font-size="5" font-weight="700" fill="#d3a345" font-family="Liberation Serif, serif" textLength="37.700" lengthAdjust="spacingAndGlyphs">PAKET MCU</text>
<text x="8.900" y="12.900" font-size="10.600" font-weight="700" fill="#dcae52" font-family="Liberation Serif, serif" textLength="48.300" lengthAdjust="spacingAndGlyphs">PREMIUM</text>
<path d="M6.200 25.700h4.800l1.800-4l2.800 9.800l2.400-7.200l1 1.400h3.700" fill="none" stroke="#d3a345" stroke-width="1"/>
<path d="M33.500 18.400c2.600 1.700 5 2.300 7.600 2.200c.5 6.400-2 11-7.600 13.400c-5.600-2.400-8.100-7-7.600-13.400c2.600.1 5-.5 7.600-2.200z" fill="none" stroke="#d3a345" stroke-width="1"/>
<path d="M32.400 22.600h2.200v2.700h2.700v2.200h-2.700v2.700h-2.200v-2.700h-2.700v-2.200h2.700z" fill="none" stroke="#d3a345" stroke-width=".8" stroke-dasharray="1.500 .7"/>
<circle cx="53.500" cy="25.300" r="6.900" fill="#b98a30" stroke="#a87c2a" stroke-width="1.200" stroke-dasharray="1.300 .9"/>
<circle cx="53.500" cy="25.300" r="4.600" fill="#caa04a"/>
<text x="49.400" y="27" font-size="4.600" font-weight="700" fill="#5c4312" font-family="Liberation Sans, sans-serif" textLength="8.200" lengthAdjust="spacingAndGlyphs">20%</text>
<path d="M26 41.400h22.900" stroke="#d3a345" stroke-width=".5"/>
<path d="M19 41.400l1.600-1v2z" fill="#d3a345"/>
<path d="M31 40.600v1.600M33.200 40.600v1.600M35.400 40.600v1.600M37.600 40.600v1.600M47.300 40.400v2" stroke="#d3a345" stroke-width=".6"/>
<text x="5.700" y="53.300" font-size="8.900" font-weight="700" fill="#d9aa4c" font-family="Liberation Sans, sans-serif" textLength="52.800" lengthAdjust="spacingAndGlyphs">Rp 2.800.000</text>
<text x="15.800" y="63.900" font-size="4.600" font-weight="700" fill="#d3a345" font-family="Liberation Sans, sans-serif" textLength="31.700" lengthAdjust="spacingAndGlyphs">Pemeriksaan</text>
<text x="14" y="69.600" font-size="4.600" font-weight="700" fill="#d3a345" font-family="Liberation Sans, sans-serif" textLength="36.700" lengthAdjust="spacingAndGlyphs">Prima Lengkap</text>
</svg></div>
<span class="t" style="left:518.67px;top:555.84px;font-size:14.6px;font-weight:400;color:#15181b;transform:scaleX(1.0599);-webkit-text-stroke:.2px #15181b;">Paket Medical Checkup Premium</span>
<span class="t" style="left:830.75px;top:557.40px;font-size:13px;font-weight:400;color:#878a99;transform:scaleX(1.0474);text-decoration:line-through;">Rp 3.500.000</span>
<span class="t" style="left:830.66px;top:577.77px;font-size:14.8px;font-weight:700;color:#13c56b;transform:scaleX(1.1492);word-spacing:-2.4px;-webkit-text-stroke:.25px #13c56b;">Rp 2.800.000</span>
<div class="a" style="left:831px;top:601.4px;width:63px;height:17.6px;background:#eb5c5c;border-radius:4px"></div>
<span class="t" style="left:838.09px;top:605.18px;font-size:10.3px;font-weight:700;color:#fff;transform:scaleX(1.0852);">20% OFF</span>
<span class="t" style="left:1096.27px;top:555.84px;font-size:14.6px;font-weight:400;color:#15181b;transform:scaleX(1.1069);-webkit-text-stroke:.2px #15181b;">6-7 jam</span>
<div class="a" style="left:1278px;top:556.4px;width:40px;height:18.3px;background:#13c56b;border-radius:4px"></div>
<span class="t" style="left:1285.35px;top:558.69px;font-size:11px;font-weight:400;color:#fff;transform:scaleX(1.0551);">Valid</span>
<span class="t" style="left:1216.95px;top:579.90px;font-size:13px;font-weight:400;color:#878a99;transform:scaleX(1.0389);">20 Oct 2025 - 31 Dec 2025</span>
<div class="a" style="left:1448.4px;top:562.6px;width:5px;height:1.3px;background:#212529"></div>
<div class="a" style="left:1554px;top:556.4px;width:42.4px;height:18.3px;background:#13c56b;border-radius:4px"></div>
<span class="t" style="left:1561.45px;top:558.69px;font-size:11px;font-weight:700;color:#fff;transform:scaleX(1.1107);">Aktif</span>
<div class="a" style="left:1654px;top:552.4px;width:40px;height:40.2px;border:1px solid #e9b949;border-radius:4.5px;background:#fff"></div>
<svg class="a" style="left:1659px;top:557px" width="32" height="32" viewBox="0 0 32 32"><path d="M5.96 8.9H16.2M5.96 7.9V27M4.96 26H23" fill="none" stroke="#e5b23f" stroke-width="2"/><path d="M22.45 14.9V27" fill="none" stroke="#e5b23f" stroke-width="1.2"/><path d="M22.6 5.6H26.4V8.5L16.5 18.4L12.5 19.5L13.6 14.5Z" fill="#fff" stroke="#e5b23f" stroke-width="1.55" stroke-linejoin="miter"/><path d="M13.6 14.5L16.5 18.4L12.3 19.7Z" fill="#e5b23f"/><path d="M23.6 6.6L14.8 15.4" stroke="#e5b23f" stroke-width="1.5" stroke-dasharray="0.9 0.6"/></svg>
<div class="a" style="left:1714.4px;top:552.4px;width:41px;height:40.2px;border:1px solid #ee6a6a;border-radius:4.5px;background:#fff"></div>
<svg class="a" style="left:1719px;top:557px" width="32" height="32" viewBox="0 0 32 32"><g fill="#ea5354"><rect x="4" y="7" width="24" height="3"/><rect x="7" y="11" width="19" height="2"/><rect x="7" y="11" width="2" height="16.6"/><rect x="24" y="11" width="2" height="16.6"/><path d="M7 25.2H26V27a1 1 0 0 1-1 1H8a1 1 0 0 1-1-1z"/><rect x="13" y="15" width="2" height="8"/><rect x="18" y="15" width="2" height="8"/></g><path d="M11 7.5V5a1 1 0 0 1 1-1H20a1 1 0 0 1 1 1V7.500" fill="none" stroke="#ea5354" stroke-width="2"/></svg>
<span class="t" style="left:350.87px;top:651.84px;font-size:14.6px;font-weight:400;color:#15181b;transform:scaleX(1.0063);-webkit-text-stroke:.2px #15181b;">4</span>
<div class="a" style="left:418px;top:647.9px;width:67px;height:67.2px;border-radius:6px;overflow:hidden"><svg width="67" height="68" viewBox="0 0 67 68" style="display:block;filter:blur(.35px)"><defs><linearGradient id="g4" x1="0" y1="0" x2="0" y2="1"><stop offset="0" stop-color="#fcd9db"/><stop offset=".5" stop-color="#fde4e5"/><stop offset="1" stop-color="#fde9ea"/></linearGradient>
<linearGradient id="g4b" x1="0" y1="0" x2="0" y2="1"><stop offset="0" stop-color="#fdeaeb" stop-opacity="0"/><stop offset="1" stop-color="#fdeaeb" stop-opacity=".95"/></linearGradient></defs>
<rect width="67" height="68" fill="url(#g4)"/>
<path d="M0 37.500C18 35 40 36 52 35.400C58 33 63 28 67 24V68H0z" fill="#f9b9bd" fill-opacity=".55"/>
<rect y="44" width="67" height="24" fill="url(#g4b)"/>
<path d="M8.700 1.400c-1-1.700-3.400-1.200-3.400.8c0 1.600 1.500 2.700 3.400 3.900c1.900-1.200 3.400-2.300 3.400-3.900c0-2-2.400-2.500-3.400-.8z" fill="#e8333a"/>
<text x="16" y="5" font-size="6.400" font-weight="700" fill="#d9262f" font-family="Liberation Sans, sans-serif" textLength="29" lengthAdjust="spacingAndGlyphs">JANTUNG</text>
<path d="M48.900 0H63.100C61 2.800 58 3.900 55.600 3.700C53 3.600 50.400 2.200 48.900 0z" fill="#e8333a"/>
<text x="5.700" y="12.900" font-size="3.800" font-weight="700" fill="#8a1f27" font-family="Liberation Sans, sans-serif" textLength="28.500" lengthAdjust="spacingAndGlyphs">Rp 2.000.000</text>
<path d="M11 11.500h23" stroke="#8a1f27" stroke-width=".4"/>
<text x="5.700" y="21.800" font-size="7.800" font-weight="700" fill="#e9363d" font-family="Liberation Sans, sans-serif" textLength="47.300" lengthAdjust="spacingAndGlyphs">Rp 1.600.000</text>
<path d="M16.500 30c-3-4.600-10.400-3.900-10.900 1.800c-.5 5.200 4 8.600 10.900 13.200c6.900-4.600 11.400-8 10.900-13.200c-.5-5.700-7.900-6.400-10.900-1.800z" fill="#e8343a"/>
<path d="M6 35.800h6" stroke="#b3222b" stroke-width=".7"/>
<path d="M11.600 36.400l1.600-3.400l1.600 6l1.700-8.400l1.600 7.600l1.400-4.400l1 2h1.400" fill="none" stroke="#fff" stroke-width="1"/>
<path d="M27.300 35.800h5.600l1 2.600l1.600-7.600l1.200 6.400l1.200-1.400" fill="none" stroke="#e8333a" stroke-width=".9"/>
<path d="M46 27.600c-3.600 1.800-5.400 6.400-4.800 12c.6 6 4.200 10.400 9.600 12.800c5.200-3 8-8.200 7.600-14.600c-.3-5.200-2.200-9.200-5.400-10.200l-1-3.200l-1.600 2.600l-1.400-2.400l-.4 2.800z" fill="#e33c3a"/>
<path d="M47 30c1.600 3 1.800 7.600.6 12M51.400 29.600c-1.800 4.400-1 12.400 2.400 16.400M44 36.800c2.600-.6 5.600-2.400 7-5M55.400 33c-1 3.400-3 6.400-5.800 8" fill="none" stroke="#b3222b" stroke-width=".8" stroke-opacity=".8"/>
<path d="M59.600 35.400c1.200 1.600 3.400 2.200 6.800 1.800" fill="none" stroke="#e8333a" stroke-width=".8"/>
<path d="M13.500 52.600c-.9-1.500-3.200-1.100-3.200.8c0 1.600 1.400 2.700 3.200 4.200c1.800-1.500 3.200-2.600 3.200-4.200c0-1.900-2.300-2.300-3.200-.8z" fill="#ef6f78"/>
<path d="M20.200 56l1.400-2.800l1.200 4.800l1.500-3.200M27.400 47.200l2 2.600l1.800-3" fill="none" stroke="#ec5a63" stroke-width=".8"/>
<path d="M35 51.400h6.600M35.600 53.400h5.600M36 55.600h5M36 57.800h6.600M34.800 60h7.800" stroke="#ec5a63" stroke-width=".8"/>
<path d="M40 56.400l4 .2l-2 2.600z" fill="#ec5a63"/>
<circle cx="53" cy="58" r="2.100" fill="none" stroke="#ee6b73" stroke-width="1"/>
<text x="5.700" y="69" font-size="4.600" font-weight="700" fill="#8a1f27" font-family="Liberation Sans, sans-serif" textLength="53.300" lengthAdjust="spacingAndGlyphs">Cek kardiovaskular</text>
</svg></div>
<span class="t" style="left:518.67px;top:651.84px;font-size:14.6px;font-weight:400;color:#15181b;transform:scaleX(1.0777);-webkit-text-stroke:.2px #15181b;">Paket Medical Checkup Jantung</span>
<span class="t" style="left:830.75px;top:653.40px;font-size:13px;font-weight:400;color:#878a99;transform:scaleX(1.0474);text-decoration:line-through;">Rp 2.000.000</span>
<span class="t" style="left:830.66px;top:673.77px;font-size:14.8px;font-weight:700;color:#13c56b;transform:scaleX(1.1103);word-spacing:-2.4px;-webkit-text-stroke:.25px #13c56b;">Rp 1.600.000</span>
<div class="a" style="left:831px;top:696.9px;width:63px;height:17.6px;background:#eb5c5c;border-radius:4px"></div>
<span class="t" style="left:838.09px;top:701.18px;font-size:10.3px;font-weight:700;color:#fff;transform:scaleX(1.0852);">20% OFF</span>
<span class="t" style="left:1096.27px;top:651.84px;font-size:14.6px;font-weight:400;color:#15181b;transform:scaleX(1.1069);-webkit-text-stroke:.2px #15181b;">3-4 jam</span>
<div class="a" style="left:1278px;top:651.9px;width:40px;height:18.3px;background:#13c56b;border-radius:4px"></div>
<span class="t" style="left:1285.35px;top:654.69px;font-size:11px;font-weight:400;color:#fff;transform:scaleX(1.0551);">Valid</span>
<span class="t" style="left:1216.95px;top:675.90px;font-size:13px;font-weight:400;color:#878a99;transform:scaleX(1.0389);">20 Oct 2025 - 31 Dec 2025</span>
<div class="a" style="left:1448.4px;top:658.6px;width:5px;height:1.3px;background:#212529"></div>
<div class="a" style="left:1554px;top:651.9px;width:42.4px;height:18.3px;background:#13c56b;border-radius:4px"></div>
<span class="t" style="left:1561.45px;top:654.69px;font-size:11px;font-weight:700;color:#fff;transform:scaleX(1.1107);">Aktif</span>
<div class="a" style="left:1654px;top:647.9px;width:40px;height:40.2px;border:1px solid #e9b949;border-radius:4.5px;background:#fff"></div>
<svg class="a" style="left:1659px;top:652px" width="32" height="32" viewBox="0 0 32 32"><path d="M5.96 8.9H16.2M5.96 7.9V27M4.96 26H23" fill="none" stroke="#e5b23f" stroke-width="2"/><path d="M22.45 14.9V27" fill="none" stroke="#e5b23f" stroke-width="1.2"/><path d="M22.6 5.6H26.4V8.5L16.5 18.4L12.5 19.5L13.6 14.5Z" fill="#fff" stroke="#e5b23f" stroke-width="1.55" stroke-linejoin="miter"/><path d="M13.6 14.5L16.5 18.4L12.3 19.7Z" fill="#e5b23f"/><path d="M23.6 6.6L14.8 15.4" stroke="#e5b23f" stroke-width="1.5" stroke-dasharray="0.9 0.6"/></svg>
<div class="a" style="left:1714.4px;top:647.9px;width:41px;height:40.2px;border:1px solid #ee6a6a;border-radius:4.5px;background:#fff"></div>
<svg class="a" style="left:1719px;top:653px" width="32" height="32" viewBox="0 0 32 32"><g fill="#ea5354"><rect x="4" y="7" width="24" height="3"/><rect x="7" y="11" width="19" height="2"/><rect x="7" y="11" width="2" height="16.6"/><rect x="24" y="11" width="2" height="16.6"/><path d="M7 25.2H26V27a1 1 0 0 1-1 1H8a1 1 0 0 1-1-1z"/><rect x="13" y="15" width="2" height="8"/><rect x="18" y="15" width="2" height="8"/></g><path d="M11 7.5V5a1 1 0 0 1 1-1H20a1 1 0 0 1 1 1V7.500" fill="none" stroke="#ea5354" stroke-width="2"/></svg>
<span class="t" style="left:350.87px;top:746.84px;font-size:14.6px;font-weight:400;color:#15181b;transform:scaleX(1.0063);-webkit-text-stroke:.2px #15181b;">5</span>
<div class="a" style="left:418px;top:743.4px;width:67px;height:67.2px;border-radius:6px;overflow:hidden"><svg width="67" height="68" viewBox="0 0 67 68" style="display:block;filter:blur(.35px)"><defs><linearGradient id="g5" x1="0" y1="0" x2="1" y2="1"><stop offset="0" stop-color="#dfe1fa"/><stop offset=".55" stop-color="#e8eefb"/><stop offset="1" stop-color="#eaf6fb"/></linearGradient></defs>
<rect width="67" height="68" fill="url(#g5)"/>
<text x="8" y="3.700" font-size="9.400" font-weight="700" fill="#35277a" font-family="Liberation Sans, sans-serif" textLength="42.300" lengthAdjust="spacingAndGlyphs">DIABETES</text>
<path d="M50.700 0H60.800C58 2.200 54 2.600 50.700 1z" fill="#4b3aa0"/>
<text x="20" y="10.300" font-size="3.800" fill="#2b2450" font-family="Liberation Sans, sans-serif" textLength="25.200" lengthAdjust="spacingAndGlyphs">Rp 1.200.000</text>
<path d="M25 9h20" stroke="#2b2450" stroke-width=".4"/>
<text x="9.800" y="19.500" font-size="9.200" fill="#ee4b55" font-family="Liberation Sans, sans-serif" textLength="10.600" lengthAdjust="spacingAndGlyphs">Rp</text>
<text x="21.200" y="19.500" font-size="9.300" font-weight="700" fill="#ee4b55" font-family="Liberation Sans, sans-serif" textLength="36" lengthAdjust="spacingAndGlyphs">960.000</text>
<rect x="25.500" y="34.700" width="19.300" height="16.500" rx=".8" fill="#cbbcee"/>
<path d="M30 35v16M33.200 35v16M36.400 35v16M39.600 35v16" stroke="#bca9e6" stroke-width=".5"/>
<path d="M27 44.600l2.800-4.200l2.600 5.600l2.400-2.400l2 1l2.200-2.800l2.600.6" fill="none" stroke="#5a49b8" stroke-width=".8"/>
<path d="M8.200 24.200h17.200c1.600 0 2.800 1.200 2.800 2.800v12.600c0 6.200-3 10.600-7.400 12.200h-8c-4.400-1.600-7.400-6-7.400-12.200V27c0-1.600 1.200-2.800 2.800-2.800z" fill="#5c63cc" stroke="#3f3fa6" stroke-width="1.100"/>
<rect x="9.400" y="28.200" width="14.700" height="12.900" rx="1.600" fill="#bfe5fb" stroke="#3f3fa6" stroke-width=".8"/>
<text x="11.600" y="36.400" font-size="7" font-weight="700" fill="#2e2b86" font-family="Liberation Sans, sans-serif" textLength="10" lengthAdjust="spacingAndGlyphs">96</text>
<path d="M15 38.600l1 1M19 38.600l1 1" stroke="#2e2b86" stroke-width=".7"/>
<rect x="11.600" y="43.800" width="3.800" height="2.600" rx="1.200" fill="#fff" stroke="#3f3fa6" stroke-width=".6"/>
<rect x="18.500" y="43.800" width="3.800" height="2.600" rx="1.200" fill="#fff" stroke="#3f3fa6" stroke-width=".6"/>
<rect x="15.800" y="51.600" width="2.800" height="6.600" rx=".6" fill="#4b4fc0"/>
<path d="M17.200 60.400c1.200 1.600 1.500 2.400 1.500 3a1.500 1.500 0 0 1-3 0c0-.6.300-1.400 1.500-3z" fill="#e8505c"/>
<path d="M34.400 23.800c1.800 2.400 2.500 3.700 2.500 4.700a2.500 2.500 0 0 1-5 0c0-1 .7-2.300 2.500-4.700z" fill="#e8586a"/>
<path d="M57.900 25c2.100 2.800 2.900 4.300 2.900 5.500a2.900 2.900 0 0 1-5.800 0c0-1.200.8-2.700 2.900-5.500z" fill="#a79be2"/>
<path d="M9.400 53.600c2 2.600 2.700 4 2.700 5.100a2.700 2.700 0 0 1-5.400 0c0-1.100.7-2.500 2.700-5.100z" fill="#8f86dc"/>
<path d="M25.700 55.400c1.600 2.100 2.200 3.200 2.200 4.100a2.200 2.200 0 0 1-4.400 0c0-.9.600-2 2.200-4.100z" fill="#a79be2"/>
<g transform="translate(50.700 35.600) rotate(-32)">
<rect x="-1.900" y="-9" width="3.800" height="15" rx=".6" fill="#a8d8f6" stroke="#3d49b4" stroke-width=".7"/>
<path d="M0 -9v-5.200" stroke="#2d3aa8" stroke-width=".9" stroke-dasharray="1 .6"/>
<path d="M-1.900 -6h1.400M-1.900 -3.600h1.400M-1.900 -1.200h1.400M-1.900 1.200h1.400M-1.900 3.600h1.400" stroke="#3d49b4" stroke-width=".5"/>
<rect x="-3.300" y="6" width="6.600" height="1.500" fill="#2d3aa8"/><rect x="-.8" y="7.500" width="1.600" height="3.600" fill="#2d3aa8"/><rect x="-2.700" y="11" width="5.400" height="1.400" fill="#2d3aa8"/>
</g>
<path d="M44 51.200c-2.800-4.400-9.800-3.700-10.300 1.700c-.5 4.900 3.800 8.100 10.300 12.300c6.500-4.200 10.800-7.400 10.300-12.300c-.5-5.400-7.500-6.100-10.300-1.700z" fill="#e6586a"/>
<path d="M35.400 56.600h5.200l1.300-2.600l1.800 5.800l1.800-4.800l1 1.600h5.600" fill="none" stroke="#fff" stroke-width=".9"/>
</svg></div>
<span class="t" style="left:518.67px;top:746.84px;font-size:14.6px;font-weight:400;color:#15181b;transform:scaleX(1.0540);-webkit-text-stroke:.2px #15181b;">Paket Medical Checkup Diabetes</span>
<span class="t" style="left:830.75px;top:748.40px;font-size:13px;font-weight:400;color:#878a99;transform:scaleX(1.0218);text-decoration:line-through;">Rp 1.200.000</span>
<span class="t" style="left:830.66px;top:768.77px;font-size:14.8px;font-weight:700;color:#13c56b;transform:scaleX(1.1461);word-spacing:-2.4px;-webkit-text-stroke:.25px #13c56b;">Rp 960.000</span>
<div class="a" style="left:831px;top:792.4px;width:63px;height:17.6px;background:#eb5c5c;border-radius:4px"></div>
<span class="t" style="left:838.09px;top:796.18px;font-size:10.3px;font-weight:700;color:#fff;transform:scaleX(1.0852);">20% OFF</span>
<span class="t" style="left:1096.27px;top:746.84px;font-size:14.6px;font-weight:400;color:#15181b;transform:scaleX(1.1069);-webkit-text-stroke:.2px #15181b;">3-4 jam</span>
<div class="a" style="left:1278px;top:747.4px;width:40px;height:18.3px;background:#13c56b;border-radius:4px"></div>
<span class="t" style="left:1285.35px;top:749.69px;font-size:11px;font-weight:400;color:#fff;transform:scaleX(1.0551);">Valid</span>
<span class="t" style="left:1216.95px;top:770.90px;font-size:13px;font-weight:400;color:#878a99;transform:scaleX(1.0389);">20 Oct 2025 - 31 Dec 2025</span>
<div class="a" style="left:1448.4px;top:753.6px;width:5px;height:1.3px;background:#212529"></div>
<div class="a" style="left:1554px;top:747.4px;width:42.4px;height:18.3px;background:#13c56b;border-radius:4px"></div>
<span class="t" style="left:1561.45px;top:749.69px;font-size:11px;font-weight:700;color:#fff;transform:scaleX(1.1107);">Aktif</span>
<div class="a" style="left:1654px;top:743.4px;width:40px;height:40.2px;border:1px solid #e9b949;border-radius:4.5px;background:#fff"></div>
<svg class="a" style="left:1659px;top:748px" width="32" height="32" viewBox="0 0 32 32"><path d="M5.96 8.9H16.2M5.96 7.9V27M4.96 26H23" fill="none" stroke="#e5b23f" stroke-width="2"/><path d="M22.45 14.9V27" fill="none" stroke="#e5b23f" stroke-width="1.2"/><path d="M22.6 5.6H26.4V8.5L16.5 18.4L12.5 19.5L13.6 14.5Z" fill="#fff" stroke="#e5b23f" stroke-width="1.55" stroke-linejoin="miter"/><path d="M13.6 14.5L16.5 18.4L12.3 19.7Z" fill="#e5b23f"/><path d="M23.6 6.6L14.8 15.4" stroke="#e5b23f" stroke-width="1.5" stroke-dasharray="0.9 0.6"/></svg>
<div class="a" style="left:1714.4px;top:743.4px;width:41px;height:40.2px;border:1px solid #ee6a6a;border-radius:4.5px;background:#fff"></div>
<svg class="a" style="left:1719px;top:748px" width="32" height="32" viewBox="0 0 32 32"><g fill="#ea5354"><rect x="4" y="7" width="24" height="3"/><rect x="7" y="11" width="19" height="2"/><rect x="7" y="11" width="2" height="16.6"/><rect x="24" y="11" width="2" height="16.6"/><path d="M7 25.2H26V27a1 1 0 0 1-1 1H8a1 1 0 0 1-1-1z"/><rect x="13" y="15" width="2" height="8"/><rect x="18" y="15" width="2" height="8"/></g><path d="M11 7.5V5a1 1 0 0 1 1-1H20a1 1 0 0 1 1 1V7.500" fill="none" stroke="#ea5354" stroke-width="2"/></svg>
<span class="t" style="left:350.87px;top:842.84px;font-size:14.6px;font-weight:400;color:#15181b;transform:scaleX(1.0063);-webkit-text-stroke:.2px #15181b;">6</span>
<div class="a" style="left:418px;top:838.9px;width:67px;height:67.2px;border-radius:6px;overflow:hidden"><svg width="67" height="68" viewBox="0 0 67 68" style="display:block;filter:blur(.35px)"><defs><linearGradient id="g6" x1="0" y1="0" x2=".6" y2="1"><stop offset="0" stop-color="#eeb09b"/><stop offset=".5" stop-color="#de9580"/><stop offset="1" stop-color="#ecae9a"/></linearGradient></defs>
<rect width="67" height="68" fill="#fde8e5"/>
<g fill="#f7c5c5" fill-opacity=".55"><circle cx="7.600" cy="7.600" r="2.800"/><circle cx="4.600" cy="5" r="2.600"/><circle cx="10.600" cy="5" r="2.600"/><circle cx="5.400" cy="10.800" r="2.600"/><circle cx="10" cy="10.600" r="2.600"/>
<circle cx="3.500" cy="19.500" r="3"/><circle cx="7" cy="16.600" r="2.800"/><circle cx="1" cy="15.600" r="2.600"/><circle cx="6.600" cy="22.600" r="2.800"/><circle cx="1.600" cy="23.600" r="2.600"/><circle cx="3" cy="29" r="3"/></g>
<circle cx="7.600" cy="7.600" r="1" fill="#f3a9a6" fill-opacity=".7"/><circle cx="3.500" cy="19.500" r="1" fill="#f3a9a6" fill-opacity=".7"/>
<text x="18.900" y="9" font-size="6.900" font-weight="400" fill="#c4566a" stroke="#c4566a" stroke-width=".2" font-family="Liberation Serif, serif" textLength="18.600" lengthAdjust="spacingAndGlyphs">PAKET</text>
<text x="26" y="15.900" font-size="7.100" font-weight="400" fill="#c4566a" stroke="#c4566a" stroke-width=".2" font-family="Liberation Serif, serif" textLength="15.900" lengthAdjust="spacingAndGlyphs">MCU</text>
<text x="26.300" y="25.600" font-size="11.500" font-style="italic" fill="#c4566a" font-family="Liberation Serif, serif" textLength="32.400" lengthAdjust="spacingAndGlyphs">Wanita</text>
<circle cx="55.700" cy="9.400" r="7.600" fill="url(#g6)"/>
<text x="51.400" y="8" font-size="2.600" fill="#b4705f" font-family="Liberation Sans, sans-serif" textLength="8.600" lengthAdjust="spacingAndGlyphs">DISKON</text>
<text x="51.200" y="13" font-size="4.600" font-weight="700" fill="#a4555a" font-family="Liberation Sans, sans-serif" textLength="9" lengthAdjust="spacingAndGlyphs">20%</text>
<path d="M5.300 31c1.700-5 5.300-8.600 7.300-12.600c1.200-2.600 1.300-4.400 3-5.200c2-.9 4 .3 4.700 2c.9 2.400 1.300 4.800 2.400 6.900c.5.900 1.100 1.700 1.100 2.300c0 .5-.6.700-1.200.8c.3.700.2 1.300-.3 1.700c.3.600.1 1-.3 1.400c.4 1.200.1 2.200-1.300 2.500V31z" fill="#de7a85"/>
<path d="M60.400 27.600c1.300-1.800 2.200-2.600 3.200-2.800c-.3 1.400-1.200 2.400-3.200 2.800z" fill="#f6c0bd"/>
<text x="26.500" y="33.600" font-size="4.600" font-weight="700" fill="#6b4046" font-family="Liberation Sans, sans-serif" textLength="24.400" lengthAdjust="spacingAndGlyphs">Rp 1.800.000</text>
</svg></div>
<span class="t" style="left:518.67px;top:842.84px;font-size:14.6px;font-weight:400;color:#15181b;transform:scaleX(1.0516);-webkit-text-stroke:.2px #15181b;">Paket Medical Checkup Wanita</span>
<span class="t" style="left:830.75px;top:844.40px;font-size:13px;font-weight:400;color:#878a99;transform:scaleX(1.0218);text-decoration:line-through;">Rp 1.800.000</span>
<span class="t" style="left:830.66px;top:864.77px;font-size:14.8px;font-weight:700;color:#13c56b;transform:scaleX(1.1103);word-spacing:-2.4px;-webkit-text-stroke:.25px #13c56b;">Rp 1.440.000</span>
<div class="a" style="left:831px;top:887.9px;width:63px;height:17.6px;background:#eb5c5c;border-radius:4px"></div>
<span class="t" style="left:838.09px;top:892.18px;font-size:10.3px;font-weight:700;color:#fff;transform:scaleX(1.0852);">20% OFF</span>
<span class="t" style="left:1096.27px;top:842.84px;font-size:14.6px;font-weight:400;color:#15181b;transform:scaleX(1.1069);-webkit-text-stroke:.2px #15181b;">4-5 jam</span>
<div class="a" style="left:1278px;top:842.9px;width:40px;height:18.3px;background:#13c56b;border-radius:4px"></div>
<span class="t" style="left:1285.35px;top:845.69px;font-size:11px;font-weight:400;color:#fff;transform:scaleX(1.0551);">Valid</span>
<span class="t" style="left:1216.95px;top:866.90px;font-size:13px;font-weight:400;color:#878a99;transform:scaleX(1.0389);">20 Oct 2025 - 31 Dec 2025</span>
<div class="a" style="left:1448.4px;top:849.6px;width:5px;height:1.3px;background:#212529"></div>
<div class="a" style="left:1554px;top:842.9px;width:42.4px;height:18.3px;background:#13c56b;border-radius:4px"></div>
<span class="t" style="left:1561.45px;top:845.69px;font-size:11px;font-weight:700;color:#fff;transform:scaleX(1.1107);">Aktif</span>
<div class="a" style="left:1654px;top:838.9px;width:40px;height:40.2px;border:1px solid #e9b949;border-radius:4.5px;background:#fff"></div>
<svg class="a" style="left:1659px;top:843px" width="32" height="32" viewBox="0 0 32 32"><path d="M5.96 8.9H16.2M5.96 7.9V27M4.96 26H23" fill="none" stroke="#e5b23f" stroke-width="2"/><path d="M22.45 14.9V27" fill="none" stroke="#e5b23f" stroke-width="1.2"/><path d="M22.6 5.6H26.4V8.5L16.5 18.4L12.5 19.5L13.6 14.5Z" fill="#fff" stroke="#e5b23f" stroke-width="1.55" stroke-linejoin="miter"/><path d="M13.6 14.5L16.5 18.4L12.3 19.7Z" fill="#e5b23f"/><path d="M23.6 6.6L14.8 15.4" stroke="#e5b23f" stroke-width="1.5" stroke-dasharray="0.9 0.6"/></svg>
<div class="a" style="left:1714.4px;top:838.9px;width:41px;height:40.2px;border:1px solid #ee6a6a;border-radius:4.5px;background:#fff"></div>
<svg class="a" style="left:1719px;top:844px" width="32" height="32" viewBox="0 0 32 32"><g fill="#ea5354"><rect x="4" y="7" width="24" height="3"/><rect x="7" y="11" width="19" height="2"/><rect x="7" y="11" width="2" height="16.6"/><rect x="24" y="11" width="2" height="16.6"/><path d="M7 25.2H26V27a1 1 0 0 1-1 1H8a1 1 0 0 1-1-1z"/><rect x="13" y="15" width="2" height="8"/><rect x="18" y="15" width="2" height="8"/></g><path d="M11 7.5V5a1 1 0 0 1 1-1H20a1 1 0 0 1 1 1V7.500" fill="none" stroke="#ea5354" stroke-width="2"/></svg>
<div class="a" style="left:1757px;top:770.8px;width:56px;height:55px;border-radius:50%;background:#50c3e6;box-shadow:0 4px 12px rgba(56,65,74,.18);z-index:30"></div>
<svg class="a" style="left:1771.95px;top:784.85px;z-index:31;transform:rotate(33deg);" width="25.3" height="25.3" viewBox="0 0 24 24"><path fill="#fff" stroke="#fff" stroke-width="0" d="M12,8A4,4 0 0,1 16,12A4,4 0 0,1 12,16A4,4 0 0,1 8,12A4,4 0 0,1 12,8M12,10A2,2 0 0,0 10,12A2,2 0 0,0 12,14A2,2 0 0,0 14,12A2,2 0 0,0 12,10M10,22C9.75,22 9.54,21.82 9.5,21.58L9.13,18.93C8.5,18.68 7.96,18.34 7.44,17.94L4.95,18.95C4.73,19.03 4.46,18.95 4.34,18.73L2.34,15.27C2.21,15.05 2.27,14.78 2.46,14.63L4.57,12.97L4.5,12L4.57,11L2.46,9.37C2.27,9.22 2.21,8.95 2.34,8.73L4.34,5.27C4.46,5.05 4.73,4.96 4.95,5.05L7.44,6.05C7.96,5.66 8.5,5.32 9.13,5.07L9.5,2.42C9.54,2.18 9.75,2 10,2H14C14.25,2 14.46,2.18 14.5,2.42L14.87,5.07C15.5,5.32 16.04,5.66 16.56,6.05L19.05,5.05C19.27,4.96 19.54,5.05 19.66,5.27L21.66,8.73C21.79,8.95 21.73,9.22 21.54,9.37L19.43,11L19.5,12L19.43,13L21.54,14.63C21.73,14.78 21.79,15.05 21.66,15.27L19.66,18.73C19.54,18.95 19.27,19.04 19.05,18.95L16.56,17.95C16.04,18.34 15.5,18.68 14.87,18.93L14.5,21.58C14.46,21.82 14.25,22 14,22H10M11.25,4L10.88,6.61C9.68,6.86 8.62,7.5 7.85,8.39L5.44,7.35L4.69,8.65L6.8,10.2C6.4,11.37 6.4,12.64 6.8,13.8L4.68,15.36L5.43,16.66L7.86,15.62C8.63,16.5 9.68,17.14 10.87,17.38L11.24,20H12.76L13.13,17.39C14.32,17.14 15.37,16.5 16.14,15.62L18.57,16.66L19.32,15.36L17.2,13.81C17.6,12.64 17.6,11.37 17.2,10.2L19.31,8.65L18.56,7.35L16.15,8.39C15.38,7.5 14.32,6.86 13.12,6.62L12.75,4H11.250Z"/></svg>
<div class="a" style="left:1835px;top:0;width:18px;height:870px;background:#fff;z-index:40"></div>
<div class="a" style="left:1841px;top:19px;width:6px;height:489px;background:#cfd9e4;border-radius:3px;z-index:41"></div>
<svg class="a" style="left:1839px;top:5px;z-index:41" width="10" height="10" viewBox="0 0 10 10"><path d="M1.6 7L5 3.6L8.4 7" fill="none" stroke="#c2c2c2" stroke-width="1.9"/></svg>
<svg class="a" style="left:1839px;top:856px;z-index:41" width="10" height="10" viewBox="0 0 10 10"><path d="M1.6 3L5 6.400L8.400 3" fill="none" stroke="#444" stroke-width="1.9"/></svg>
</div></body></html>
